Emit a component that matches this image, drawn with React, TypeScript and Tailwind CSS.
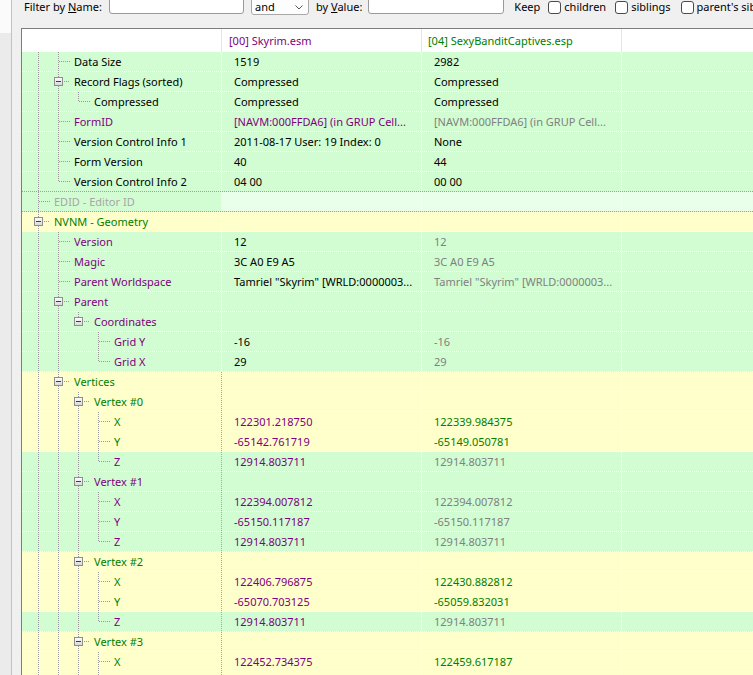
import React from 'react';

const K = '#000000';
const P = '#800080';
const G = '#008000';
const S = '#808080';
const L = '#a6a6a6';

type Row = {
    label: string;
    level: number;
    box?: boolean;
    last?: boolean;
    cont: number[];
    bg: 'g' | 'y' | 'e';
    lc: string;
    v1?: string;
    c1?: string;
    v2?: string;
    c2?: string;
    sepGray?: boolean;
    divGray?: boolean;
};

const rows: Row[] = [
    { label: 'Data Size', level: 1, cont: [0], bg: 'g', lc: K, v1: '1519', c1: K, v2: '2982', c2: K },
    { label: 'Record Flags (sorted)', level: 1, box: true, cont: [0], bg: 'g', lc: K, v1: 'Compressed', c1: K, v2: 'Compressed', c2: K },
    { label: 'Compressed', level: 2, last: true, cont: [0, 1], bg: 'g', lc: K, v1: 'Compressed', c1: K, v2: 'Compressed', c2: K },
    { label: 'FormID', level: 1, cont: [0], bg: 'g', lc: P, v1: '[NAVM:000FFDA6] (in GRUP Cell...', c1: P, v2: '[NAVM:000FFDA6] (in GRUP Cell...', c2: S },
    { label: 'Version Control Info 1', level: 1, cont: [0], bg: 'g', lc: K, v1: '2011-08-17 User: 19 Index: 0', c1: K, v2: 'None', c2: K },
    { label: 'Form Version', level: 1, cont: [0], bg: 'g', lc: K, v1: '40', c1: K, v2: '44', c2: K },
    { label: 'Version Control Info 2', level: 1, last: true, cont: [0], bg: 'g', lc: K, v1: '04 00', c1: K, v2: '00 00', c2: K, sepGray: true },
    { label: 'EDID - Editor ID', level: 0, cont: [], bg: 'e', lc: L, sepGray: true },
    { label: 'NVNM - Geometry', level: 0, box: true, cont: [], bg: 'y', lc: G },
    { label: 'Version', level: 1, cont: [0], bg: 'g', lc: P, v1: '12', c1: K, v2: '12', c2: S },
    { label: 'Magic', level: 1, cont: [0], bg: 'g', lc: P, v1: '3C A0 E9 A5', c1: K, v2: '3C A0 E9 A5', c2: S },
    { label: 'Parent Worldspace', level: 1, cont: [0], bg: 'g', lc: P, v1: 'Tamriel "Skyrim" [WRLD:0000003...', c1: K, v2: 'Tamriel "Skyrim" [WRLD:0000003...', c2: S },
    { label: 'Parent', level: 1, box: true, cont: [0], bg: 'g', lc: P },
    { label: 'Coordinates', level: 2, box: true, last: true, cont: [0, 1], bg: 'g', lc: P },
    { label: 'Grid Y', level: 3, cont: [0, 1], bg: 'g', lc: P, v1: '-16', c1: K, v2: '-16', c2: S },
    { label: 'Grid X', level: 3, last: true, cont: [0, 1], bg: 'g', lc: P, v1: '29', c1: K, v2: '29', c2: S },
    { label: 'Vertices', level: 1, box: true, cont: [0], bg: 'y', lc: G, divGray: true },
    { label: 'Vertex #0', level: 2, box: true, cont: [0, 1], bg: 'y', lc: G, divGray: true },
    { label: 'X', level: 3, cont: [0, 1, 2], bg: 'y', lc: G, v1: '122301.218750', c1: P, v2: '122339.984375', c2: G, divGray: true },
    { label: 'Y', level: 3, cont: [0, 1, 2], bg: 'y', lc: G, v1: '-65142.761719', c1: P, v2: '-65149.050781', c2: G, divGray: true },
    { label: 'Z', level: 3, last: true, cont: [0, 1, 2], bg: 'g', lc: P, v1: '12914.803711', c1: P, v2: '12914.803711', c2: S, divGray: true },
    { label: 'Vertex #1', level: 2, box: true, cont: [0, 1], bg: 'g', lc: P, divGray: true },
    { label: 'X', level: 3, cont: [0, 1, 2], bg: 'g', lc: P, v1: '122394.007812', c1: P, v2: '122394.007812', c2: S, divGray: true },
    { label: 'Y', level: 3, cont: [0, 1, 2], bg: 'g', lc: P, v1: '-65150.117187', c1: P, v2: '-65150.117187', c2: S, divGray: true },
    { label: 'Z', level: 3, last: true, cont: [0, 1, 2], bg: 'g', lc: P, v1: '12914.803711', c1: P, v2: '12914.803711', c2: S, divGray: true },
    { label: 'Vertex #2', level: 2, box: true, cont: [0, 1], bg: 'y', lc: G, divGray: true },
    { label: 'X', level: 3, cont: [0, 1, 2], bg: 'y', lc: G, v1: '122406.796875', c1: P, v2: '122430.882812', c2: G, divGray: true },
    { label: 'Y', level: 3, cont: [0, 1, 2], bg: 'y', lc: G, v1: '-65070.703125', c1: P, v2: '-65059.832031', c2: G, divGray: true },
    { label: 'Z', level: 3, last: true, cont: [0, 1, 2], bg: 'g', lc: P, v1: '12914.803711', c1: P, v2: '12914.803711', c2: S, divGray: true },
    { label: 'Vertex #3', level: 2, box: true, cont: [0, 1], bg: 'y', lc: G, divGray: true },
    { label: 'X', level: 3, cont: [0, 1, 2], bg: 'y', lc: G, v1: '122452.734375', c1: P, v2: '122459.617187', c2: G, divGray: true },
    { label: 'Y', level: 3, cont: [0, 1, 2], bg: 'y', lc: G, v1: '-65064.265625', c1: P, v2: '-65068.648437', c2: G, divGray: true },
];

const LINE = '#9a9a9a';

function TreeGlyph({ r }: { r: Row }) {
    const w = 20 * r.level + 30;
    const cx = 16 + 20 * r.level + 0.5;
    const mid = 9.5;
    return (
        <svg width={w} height={19} className="shrink-0" shapeRendering="crispEdges">
            {r.cont.map((k) => (
                <line key={k} x1={16 + 20 * k + 0.5} y1={0} x2={16 + 20 * k + 0.5} y2={19} stroke={LINE} strokeDasharray="1 1" />
            ))}
            <line x1={cx} y1={0} x2={cx} y2={r.last ? mid : 19} stroke={LINE} strokeDasharray="1 1" />
            <line x1={r.box ? cx + 5 : cx} y1={mid} x2={28 + 20 * r.level} y2={mid} stroke={LINE} strokeDasharray="1 1" />
            {r.box && (
                <g>
                    <defs>
                        <linearGradient id="bx" x1="0" y1="0" x2="0" y2="1">
                            <stop offset="0" stopColor="#ffffff" />
                            <stop offset="1" stopColor="#d6d6d6" />
                        </linearGradient>
                    </defs>
                    <rect x={cx - 4} y={5.5} width={8} height={8} fill="url(#bx)" stroke="#8f8f8f" />
                    <line x1={cx - 2.5} y1={mid} x2={cx + 2.5} y2={mid} stroke="#2a3a78" />
                </g>
            )}
        </svg>
    );
}

function DataRow({ r }: { r: Row }) {
    const bg = r.bg === 'y' ? 'bg-[#ffffcc]' : 'bg-[#d2fdd2]';
    const rest = r.bg === 'e' ? 'bg-[#e9ffe9]' : '';
    const sep = r.sepGray ? 'border-[#a0a0a0]' : 'border-white';
    const div1 = r.divGray ? 'border-r-[#a8a8a8]' : 'border-r-white';
    return (
        <div className={`flex h-[20px] shrink-0 border-b border-dotted ${sep} ${bg}`}>
            <div className={`flex w-[200px] shrink-0 items-center overflow-hidden border-r border-dotted ${div1}`}>
                <TreeGlyph r={r} />
                <span className="ml-[2px] whitespace-nowrap pt-[2px]" style={{ color: r.lc }}>{r.label}</span>
            </div>
            <div className={`flex w-[200px] shrink-0 items-center overflow-hidden border-r border-dotted border-r-white pl-[12px] ${rest}`}>
                <span className="whitespace-nowrap pt-[2px]" style={{ color: r.c1 }}>{r.v1}</span>
            </div>
            <div className={`flex w-[200px] shrink-0 items-center overflow-hidden border-r border-dotted border-r-white pl-[12px] ${rest}`}>
                <span className="whitespace-nowrap pt-[2px]" style={{ color: r.c2 }}>{r.v2}</span>
            </div>
            <div className={`flex-1 ${rest}`} />
        </div>
    );
}

function CheckBox() {
    return <div className="h-[13px] w-[13px] shrink-0 rounded-[3px] border border-[#4a4a4a] bg-white" />;
}

export default function App() {
    return (
        <div className="flex h-[675px] w-[753px] overflow-hidden bg-[#f0f0f0] font-['Noto_Sans',sans-serif] text-[11px] text-black">
            {/* left tree panel, mostly cut off */}
            <div className="flex w-[11px] shrink-0 flex-col">
                <div className="h-[33px] bg-[#fbfbfb]" />
                <div className="flex-1 bg-[#ebebeb]" />
            </div>
            <div className="w-px shrink-0 bg-[#c2c2c2]" />

            <div className="flex min-w-0 flex-1 flex-col">
                {/* filter bar */}
                <div className="h-[28px] shrink-0 overflow-hidden">
                    <div className="flex h-[14px] items-center whitespace-nowrap pl-[12px] leading-[14px]">
                        <span>Filter by <u>N</u>ame:</span>
                        <div className="-mt-[9px] ml-[7px] h-[23px] w-[135px] shrink-0 self-start rounded-[3px] border border-[#9a9a9a] bg-white" />
                        <div className="-mt-[9px] ml-[7px] flex h-[24px] w-[58px] shrink-0 items-start justify-between self-start rounded-[3px] border border-[#a8a8a8] bg-[#fdfdfd] pl-[3px] pr-[5px] pt-[8px]">
                            <span>and</span>
                            <svg width="8" height="5" className="mt-[5px]">
                                <path d="M0.5 0.5 L4 4 L7.5 0.5" fill="none" stroke="#555" strokeWidth="1" />
                            </svg>
                        </div>
                        <span className="ml-[7px]">by <u>V</u>alue:</span>
                        <div className="-mt-[9px] ml-[6px] h-[23px] w-[136px] shrink-0 self-start rounded-[3px] border border-[#9a9a9a] bg-white" />
                        <span className="ml-[10px]">Keep</span>
                        <div className="ml-[8px]"><CheckBox /></div>
                        <span className="ml-[3px]">children</span>
                        <div className="ml-[9px]"><CheckBox /></div>
                        <span className="ml-[3px]">siblings</span>
                        <div className="ml-[10px]"><CheckBox /></div>
                        <span className="ml-[3px]">parent's siblings</span>
                    </div>
                </div>

                {/* record view */}
                <div className="ml-[9px] flex min-h-0 flex-1 flex-col overflow-hidden border-l border-t border-[#7d7d7d] bg-white">
                    <div className="flex h-[23px] shrink-0">
                        <div className="w-[200px] shrink-0 border-r border-[#e5e5e5]" />
                        <div className="flex w-[200px] shrink-0 items-center border-r border-[#e5e5e5] pl-[7px] pt-[2px] text-[#800080]">[00] Skyrim.esm</div>
                        <div className="flex w-[200px] shrink-0 items-center border-r border-[#e5e5e5] pl-[6px] pt-[2px] text-[#008000]">[04] SexyBanditCaptives.esp</div>
                        <div className="flex-1" />
                    </div>
                    {rows.map((r, i) => (
                        <DataRow key={i} r={r} />
                    ))}
                </div>
            </div>
        </div>
    );
}
